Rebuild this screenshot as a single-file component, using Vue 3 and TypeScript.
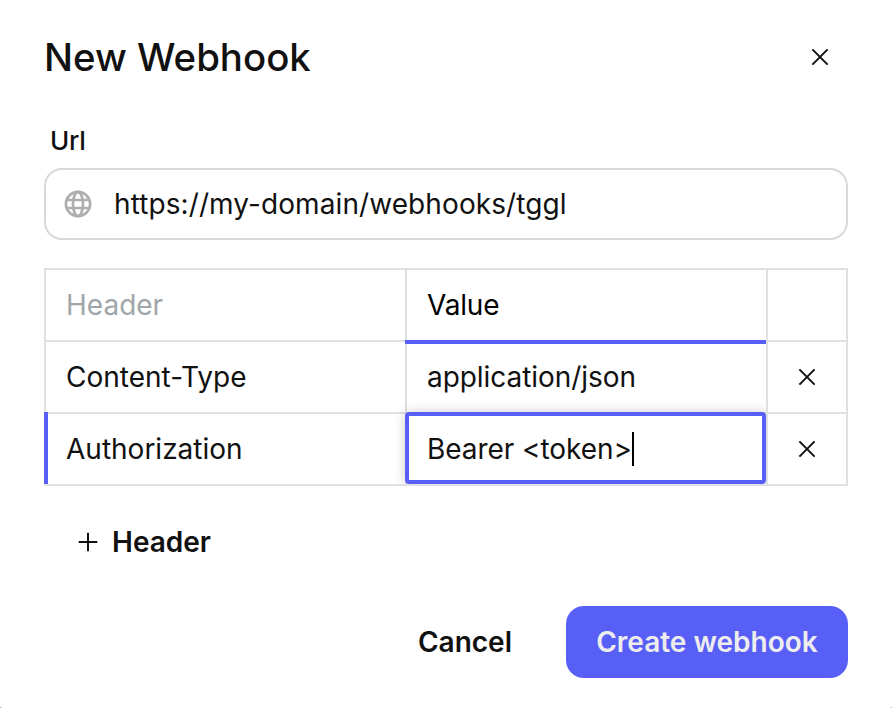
<script setup lang="ts">
interface HeaderRow {
  name: string
  value: string
  editing?: boolean
}

const rows: HeaderRow[] = [
  { name: 'Content-Type', value: 'application/json' },
  { name: 'Authorization', value: 'Bearer <token>', editing: true },
]
</script>

<template>
  <main class="dialog">
    <header class="title-bar">
      <h1>New Webhook</h1>
      <svg class="close" viewBox="0 0 20 20"><path d="M2.4 2.4 17.6 17.6M17.6 2.4 2.4 17.6" /></svg>
    </header>

    <label class="label">Url</label>
    <div class="field">
      <svg class="globe" viewBox="0 0 28 28">
        <circle cx="14" cy="14" r="12.1" />
        <ellipse cx="14" cy="14" rx="5" ry="12.1" />
        <path d="M2.8 10H25.2M2.8 18H25.2" />
      </svg>
      <span class="url">https://my-domain/webhooks/tggl</span>
    </div>

    <section class="grid">
      <div class="cell muted">Header</div>
      <div class="cell active-column">Value</div>
      <div class="cell"></div>
      <template v-for="row in rows" :key="row.name">
        <div class="cell" :class="{ 'active-row': row.editing }">{{ row.name }}</div>
        <div class="cell value" :class="{ editing: row.editing }">
          <span class="value-text">{{ row.value }}</span><i v-if="row.editing" class="caret"></i>
        </div>
        <div class="cell remove">
          <svg class="close" viewBox="0 0 20 20"><path d="M2.4 2.4 17.6 17.6M17.6 2.4 2.4 17.6" /></svg>
        </div>
      </template>
    </section>

    <button class="add">
      <svg class="plus" viewBox="0 0 20 20"><path d="M10 .7V19.3M.7 10H19.3" /></svg>
      <span>Header</span>
    </button>

    <footer class="actions">
      <button class="cancel">Cancel</button>
      <button class="create">Create webhook</button>
    </footer>
  </main>
</template>

<style>
html {
  background: #999;
}
</style>

<style scoped>
.dialog {
  box-sizing: border-box;
  width: 892px;
  height: 708px;
  padding: 31px 44px 30px;
  overflow: hidden;
  border-radius: 0 0 2px 2px;
  background: #fff;
  color: #111;
  font: 400 28px/36px Inter, sans-serif;
}
.title-bar {
  display: flex;
  align-items: center;
  justify-content: space-between;
  height: 52px;
  padding-right: 18px;
}
h1 {
  margin: 0;
  font-size: 38.4px;
  font-weight: 500;
  line-height: 52px;
}
svg {
  display: block;
  flex: none;
  fill: none;
  stroke: #111;
  stroke-width: 2;
}
.close {
  width: 20px;
  height: 20px;
}
.label {
  display: block;
  margin: 40px 0 9px 6px;
  font-size: 26px;
  font-weight: 500;
  letter-spacing: -0.2px;
}
.field {
  box-sizing: border-box;
  display: flex;
  align-items: center;
  gap: 22px;
  height: 72px;
  padding: 0 18px;
  border: 2px solid #d9d9d9;
  border-radius: 18px;
}
.url {
  letter-spacing: 0.09px;
}
.globe {
  width: 28px;
  height: 28px;
  stroke: #aeaeae;
  stroke-width: 2.7;
}
.grid {
  display: grid;
  grid-template-columns: 361px 361px 80px;
  grid-auto-rows: 72px;
  margin-top: 28px;
  border: solid #e0e0e0;
  border-width: 2px 0 0 2px;
  isolation: isolate;
}
.cell {
  position: relative;
  box-sizing: border-box;
  display: flex;
  align-items: center;
  padding-left: 20px;
  border: solid #e0e0e0;
  border-width: 0 2px 2px 0;
}
.muted {
  color: #9fa6a9;
}
.remove {
  padding-left: 29px;
}
.value-text {
  letter-spacing: -0.06px;
}
.active-column {
  z-index: 1;
  color: #000;
  letter-spacing: -0.2px;
}
.active-column::after {
  content: '';
  position: absolute;
  right: 0;
  bottom: -4px;
  left: -2px;
  height: 4px;
  background: #585ff6;
}
.active-row::before {
  content: '';
  position: absolute;
  top: -2px;
  bottom: 0;
  left: -2px;
  width: 4px;
  background: #585ff6;
}
.editing::before {
  content: '';
  position: absolute;
  inset: -2px 0 0 -2px;
  border: 4px solid #585ff6;
  border-radius: 4px;
  box-shadow: 0 0 12px rgba(0, 0, 0, 0.2);
  clip-path: inset(-12px 0 0 -12px);
}
.caret {
  width: 2px;
  height: 34px;
  background: #000;
}
button {
  border: 0;
  background: none;
  color: #111;
  font: 600 28px/36px Inter, sans-serif;
}
.add {
  display: flex;
  align-items: center;
  gap: 14px;
  height: 36px;
  margin: 38px 0 0 34px;
  padding: 0;
}
.plus {
  width: 20px;
  height: 20px;
}
.actions {
  display: flex;
  align-items: center;
  justify-content: flex-end;
  gap: 54px;
  margin-top: 46px;
}
.cancel {
  padding: 0;
}
.create {
  width: 282px;
  height: 72px;
  padding: 0;
  border-radius: 18px;
  background: #585ff6;
  color: #ededed;
}
</style>
